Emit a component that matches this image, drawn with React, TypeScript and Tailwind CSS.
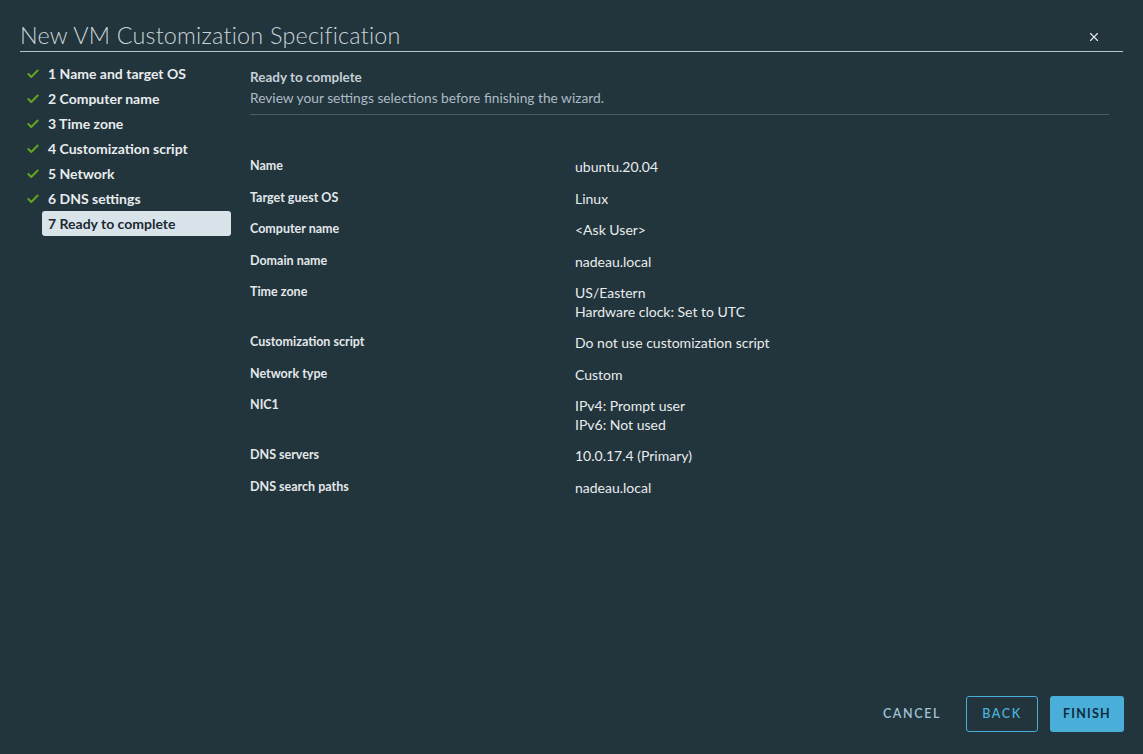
import { Check, X } from 'lucide-react';

const steps = [
  '1 Name and target OS',
  '2 Computer name',
  '3 Time zone',
  '4 Customization script',
  '5 Network',
  '6 DNS settings',
];

const rows: { label: string; value: string[] }[] = [
  { label: 'Name', value: ['ubuntu.20.04'] },
  { label: 'Target guest OS', value: ['Linux'] },
  { label: 'Computer name', value: ['<Ask User>'] },
  { label: 'Domain name', value: ['nadeau.local'] },
  { label: 'Time zone', value: ['US/Eastern', 'Hardware clock: Set to UTC'] },
  { label: 'Customization script', value: ['Do not use customization script'] },
  { label: 'Network type', value: ['Custom'] },
  { label: 'NIC1', value: ['IPv4: Prompt user', 'IPv6: Not used'] },
  { label: 'DNS servers', value: ['10.0.17.4 (Primary)'] },
  { label: 'DNS search paths', value: ['nadeau.local'] },
];

export default function App() {
  return (
    <div
      className="w-[1143px] h-[754px] bg-[#22343c] flex flex-col text-[#e8e8e8]"
      style={{ fontFamily: 'Lato, "Noto Sans", sans-serif' }}
    >
      {/* header */}
      <div className="mx-[20px] mt-[20px] h-[32px] border-b border-[#b9c4ca] flex items-start justify-between">
        <h1 className="text-[23.4px] font-light leading-[30px] text-[#c9d3d8] tracking-[0.2px]">
          New VM Customization Specification
        </h1>
        <button className="mt-[10px] mr-[22px] text-[#e0e6e9]">
          <X size={14} strokeWidth={2} />
        </button>
      </div>

      <div className="flex flex-1 min-h-0">
        {/* steps */}
        <nav className="w-[250px] shrink-0 pl-[26px] pt-[9px] flex flex-col">
          {steps.map(s => (
            <div key={s} className="h-[25px] flex items-center gap-[8px] text-[14px] font-bold text-[#e8ecee]">
              <Check size={14} strokeWidth={3.5} className="text-[#62a420]" />
              <span>{s}</span>
            </div>
          ))}
          <div className="ml-[16px] w-[189px] h-[25px] rounded-[3px] bg-[#d9e4ea] pl-[6px] flex items-center text-[14px] font-bold text-[#1b2a32]">
            7 Ready to complete
          </div>
        </nav>

        {/* content */}
        <main className="flex-1 pr-[34px] pt-[16px] flex flex-col">
          <div className="border-b border-[#485c66] pb-[7px]">
            <h2 className="text-[13.5px] font-bold leading-[18px] text-[#c5d0d6]">Ready to complete</h2>
            <p className="mt-[3px] text-[13.75px] leading-[18px] text-[#adbbc4]">
              Review your settings selections before finishing the wizard.
            </p>
          </div>

          <div className="mt-[43px] flex flex-col">
            {rows.map(r => (
              <div key={r.label} className="flex pb-[13px]">
                <div className="w-[325px] shrink-0 text-[12.5px] font-bold leading-[16px] text-[#e3e8eb]">{r.label}</div>
                <div className="text-[14px] leading-[18.5px] text-[#e8ecee]">
                  {r.value.map(v => (
                    <div key={v}>{v}</div>
                  ))}
                </div>
              </div>
            ))}
          </div>

          <div className="mt-auto mb-[22px] flex justify-end items-center gap-[13px] -mr-[15px]">
            <button className="h-[36px] px-[12px] pt-[1px] text-[12.5px] font-semibold tracking-[1.6px] text-[#9fc4d6]">
              CANCEL
            </button>
            <button className="h-[36px] w-[72px] pt-[1px] rounded-[3px] border border-[#49afd9] text-[12.5px] font-semibold tracking-[1.6px] text-[#49afd9]">
              BACK
            </button>
            <button className="h-[36px] w-[74px] ml-[-1px] pt-[1px] rounded-[3px] bg-[#49afd9] text-[12.5px] font-bold tracking-[1.2px] text-[#0f2b3b]">
              FINISH
            </button>
          </div>
        </main>
      </div>
    </div>
  );
}
